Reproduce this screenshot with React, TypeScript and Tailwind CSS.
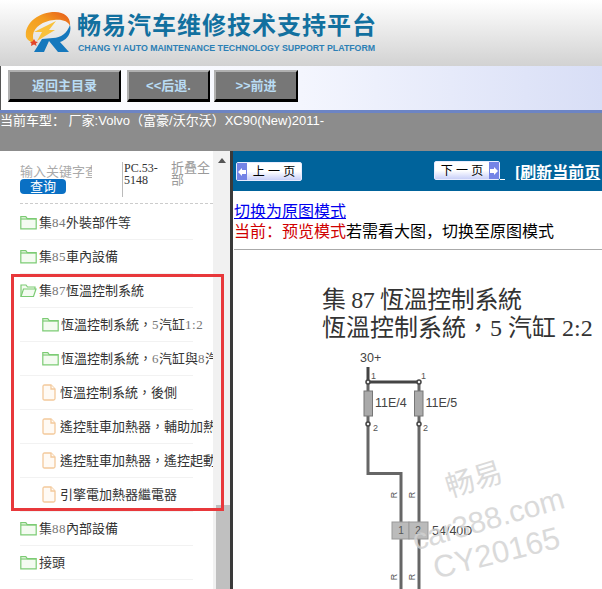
import React from "react";

const cjk = '"Liberation Sans","Noto Sans CJK TC",sans-serif';
const sc = '"Liberation Sans","Noto Sans CJK SC",sans-serif';
const serif = '"Liberation Serif","Noto Sans CJK TC",serif';
const serifSc = '"Liberation Serif","Noto Sans CJK SC",serif';

function Folder({ open }: { open?: boolean }) {
  return (
    <svg width="17" height="15" viewBox="0 0 17 15" className="shrink-0" fill="#f4fbf1" stroke="#7ccb74" strokeWidth="1.2">
      {open ? (
        <>
          <path d="M1 13.500V2h5l1.500 2H15v2" />
          <path d="M1 13.500L3.500 6H16l-2.500 7.500z" />
        </>
      ) : (
        <>
          <path d="M.8 13.800V1.600h5l1.400 2h9v10.200z" />
          <path d="M.8 4h15.400" />
        </>
      )}
    </svg>
  );
}

function Doc() {
  return (
    <svg width="14" height="17" viewBox="0 0 14 17" className="shrink-0" fill="#fffaf4" stroke="#f3c99b" strokeWidth="1.3">
      <path d="M1 2.500Q1 1 2.500 1H9l4 4v9.500q0 1.500-1.500 1.500h-9Q1 16 1 14.500z" />
      <path d="M9 1v4h4" />
    </svg>
  );
}

type Row = { t: React.ReactNode; kind: "folder" | "open" | "doc"; sub?: boolean };
const n = (s: string) => <span className="text-[#777] tracking-[0.5px]" style={{ fontFamily: serif }}>{s}</span>;
const rows: Row[] = [
  { t: <>集{n("84")}外裝部件等</>, kind: "folder" },
  { t: <>集{n("85")}車內設備</>, kind: "folder" },
  { t: <>集{n("87")}恆溫控制系統</>, kind: "open" },
  { t: <>恆溫控制系統，{n("5")}汽缸{n("1:2")}</>, kind: "folder", sub: true },
  { t: <>恆溫控制系統，{n("6")}汽缸與{n("8")}汽缸</>, kind: "folder", sub: true },
  { t: <>恆溫控制系統，後側</>, kind: "doc", sub: true },
  { t: <>遙控駐車加熱器，輔助加熱器</>, kind: "doc", sub: true },
  { t: <>遙控駐車加熱器，遙控起動</>, kind: "doc", sub: true },
  { t: <>引擎電加熱器繼電器</>, kind: "doc", sub: true },
  { t: <>集{n("88")}內部設備</>, kind: "folder" },
  { t: <>接頭</>, kind: "folder" },
];

function NavBtn({ w, children }: { w: string; children: React.ReactNode }) {
  return (
    <div className={`${w} h-[32px] flex items-center justify-center bg-[#777] border-t-2 border-l-2 border-t-[#b0b0b0] border-l-[#b0b0b0] border-b-[3px] border-r-[2px] border-b-black border-r-black text-[#b9dcf4] text-[13px] font-bold whitespace-nowrap`} style={{ fontFamily: sc }}>
      {children}
    </div>
  );
}

function PageBtn({ label, dir }: { label: string; dir: "l" | "r" }) {
  const arrow = (
    <div className="w-[10px] self-stretch bg-[#7484e6] flex items-center justify-center">
      <svg width="8" height="8" viewBox="0 0 8 8" fill="#fff">
        {dir === "l" ? <path d="M0 4l4-4v2h4v4H4v2z" /> : <path d="M8 4L4 0v2H0v4h4v2z" />}
      </svg>
    </div>
  );
  return (
    <div className="w-[66px] h-[19px] flex items-center rounded-[2px] bg-gradient-to-b from-white via-white to-[#c9d0f8] border border-[#e8ecff] text-black text-[12px]" style={{ fontFamily: sc }}>
      {dir === "l" && arrow}
      <span className="flex-1 text-center whitespace-nowrap">{label}</span>
      {dir === "r" && arrow}
    </div>
  );
}

function Diagram() {
  return (
    <svg width="262" height="244" viewBox="0 0 262 244" className="block" style={{ fontFamily: '"Liberation Sans",sans-serif' }}>
      <g fill="none" stroke="#666" strokeWidth="3">
        <path d="M79 37V244" />
        <path d="M28 37V128.500H61V244" />
      </g>
      <path d="M28 22V37H79" fill="none" stroke="#444" strokeWidth="3" />
      <rect x="24" y="46" width="8.500" height="25" fill="#aaa" stroke="#777" />
      <rect x="74.500" y="46" width="8.500" height="25" fill="#aaa" stroke="#777" />
      <g fill="#eee" stroke="#444" strokeWidth="1.500">
        <circle cx="28" cy="37" r="2" />
        <circle cx="79" cy="37" r="2" />
        <circle cx="28" cy="79" r="2" />
        <circle cx="79" cy="79" r="2" />
      </g>
      <rect x="52" y="177" width="17" height="17" fill="#bbb" stroke="#999" />
      <rect x="69" y="177" width="19" height="17" fill="#bbb" stroke="#999" />
      <g fill="#444" fontSize="12.500">
        <text x="20" y="17">30+</text>
        <text x="35" y="62">11E/4</text>
        <text x="85.500" y="62">11E/5</text>
        <text x="92" y="190">54/40D</text>
      </g>
      <g fill="#555" fontSize="9">
        <text x="31" y="34">1</text>
        <text x="81" y="34">1</text>
        <text x="33" y="86">2</text>
        <text x="83" y="86">2</text>
      </g>
      <g fill="#555" fontSize="10" textAnchor="middle">
        <text x="61" y="189">1</text>
        <text x="78" y="189">2</text>
      </g>
      <g fill="#555" fontSize="9" textAnchor="middle">
        <text transform="translate(57 150) rotate(-90)">R</text>
        <text transform="translate(75 150) rotate(-90)">R</text>
        <text transform="translate(57 232) rotate(-90)">R</text>
        <text transform="translate(75 232) rotate(-90)">R</text>
      </g>
      <g fill="#d2d2d2" opacity="0.8" textAnchor="middle">
        <text transform="translate(137 144) rotate(-17)" fontSize="29" style={{ fontFamily: sc }}>畅易</text>
        <text transform="translate(151 184) rotate(-16)" fontSize="30">car388.com</text>
        <text transform="translate(159 218) rotate(-14)" fontSize="31">CY20165</text>
      </g>
    </svg>
  );
}

export default function App() {
  return (
    <div className="relative w-[602px] h-[589px] overflow-hidden bg-white" style={{ fontFamily: cjk }}>
      {/* header */}
      <header className="h-[66px] bg-gradient-to-b from-white to-[#d2d2d2] flex items-start pl-[25px] pt-[12px]">
        <svg width="46" height="41" viewBox="0 0 46 41" className="shrink-0">
          <defs>
            <linearGradient id="o" x1="0" y1="1" x2="1" y2="0">
              <stop offset="0" stopColor="#f8b62d" />
              <stop offset="0.6" stopColor="#f39a1f" />
              <stop offset="1" stopColor="#e5561c" />
            </linearGradient>
          </defs>
          <path d="M1 25C-1 12 13 0 30 0c10 0 16 6 15 14-2-5-8-7-16-6C18 9 9 15 8 23c0 3 0 6 2 8-5-1-8-3-9-6z" fill="url(#o)" />
          <path d="M31 9L24 18h6L12 29l5-9h-8z" fill="#f9c13a" />
          <path d="M9 27l1.500 2.500L13 30l-2 1.500.5 2.500-2.500-1.500L6 34l.5-2.500L5 30l2.500-.5z" fill="#e2452a" />
          <path d="M45 13c2 8-3 15-10 17l9 10H33l-9-11-5 11H9l8-13 11-1c8 0 14-5 17-13z" fill="#1578bd" />
        </svg>
        <div className="ml-[6px] -mt-[1px]">
          <div className="text-[24px] leading-[30px] font-bold text-[#12709f] whitespace-nowrap tracking-[1px]" style={{ fontFamily: sc }}>畅易汽车维修技术支持平台</div>
          <div className="text-[8.800px] leading-[12px] font-bold text-[#2c7fb5] whitespace-nowrap ml-[1px] mt-[1px]">CHANG YI AUTO MAINTENANCE TECHNOLOGY SUPPORT PLATFORM</div>
        </div>
      </header>

      {/* nav */}
      <nav className="h-[44px] bg-gradient-to-r from-white via-[#f4f6fe] to-[#d8def6] flex items-start pl-[7px] pt-[4px] border-l border-[#555]">
        <NavBtn w="w-[113px]">返回主目录</NavBtn>
        <div className="ml-[6px]"><NavBtn w="w-[83px]">&lt;&lt;后退.</NavBtn></div>
        <div className="ml-[4px]"><NavBtn w="w-[84px]">&gt;&gt;前进</NavBtn></div>
      </nav>
      <div className="h-[3px] bg-[#6c84c4]" />

      {/* model */}
      <div className="h-[38px] bg-[#8c8c8c] text-white text-[13px] leading-[15px] whitespace-nowrap" style={{ fontFamily: sc }}>
        当前车型： 厂家:Volvo（富豪/沃尔沃）XC90(New)2011-
      </div>

      <div className="flex h-[438px]">
        {/* sidebar */}
        <aside className="relative w-[230px] shrink-0 flex overflow-hidden">
          <div className="w-[213px] shrink-0 overflow-hidden">
            <div className="h-[53px] ml-[20px] flex border-b border-dashed border-[#ccc] pt-[11px] box-border">
              <div className="w-[72px] overflow-hidden">
                <div className="text-[13px] leading-[15px] text-[#aaa] whitespace-nowrap h-[15px] mt-[2px]" style={{ fontFamily: sc }}>输入关键字查询</div>
                <div className="w-[46px] h-[15px] rounded-[4px] bg-[#0a70c4] text-white text-[13px] leading-[15px] text-center" style={{ fontFamily: sc }}>查询</div>
              </div>
              <div className="ml-[30px] w-[46px] h-[35px] border-l border-[#bbb] text-[12px] leading-[12px] text-[#333] pl-[1px]" style={{ fontFamily: serif }}>PC.53-5148</div>
              <div className="ml-[3px] w-[42px] text-[#999] text-[13px] leading-[12px]" style={{ fontFamily: sc }}>折叠全部</div>
            </div>
            <div className="pt-[2px]">
              {rows.map((r, i) => (
                <div key={i} className={`h-[34px] ml-[20px] w-[173px] flex items-center border-b border-[#f2f2f2] text-[13px] text-[#333] whitespace-nowrap ${r.sub ? "pl-[22px]" : ""}`}>
                  <div className={`flex items-center shrink-0 ${r.kind === "doc" ? "gap-[4px]" : "gap-[2px]"}`}>
                    {r.kind === "doc" ? <Doc /> : <Folder open={r.kind === "open"} />}
                    <span>{r.t}</span>
                  </div>
                </div>
              ))}
            </div>
          </div>
          {/* scrollbar */}
          <div className="w-[17px] shrink-0 bg-[#f1f1f1] flex flex-col items-center">
            <div className="mt-[7px] w-0 h-0 border-l-[4px] border-r-[4px] border-b-[5px] border-l-transparent border-r-transparent border-b-[#555]" />
            <div className="mt-auto w-[14px] h-[84px] ml-[2px] bg-[#c0c0c0]" />
          </div>
        </aside>
        <div className="w-[3px] shrink-0 bg-[#3a3a3a]" />

        {/* content */}
        <main className="flex-1 min-w-0 overflow-hidden">
          <div className="h-[40px] bg-[#00639b] flex items-start pt-[11px] pl-[3px] whitespace-nowrap" style={{ fontFamily: serifSc }}>
            <PageBtn label="上 一 页" dir="l" />
            <div className="ml-[132px] -mt-[1px]"><PageBtn label="下 一 页" dir="r" /></div>
            <span className="w-[5px] h-[18px] border-b border-white" />
            <span className="ml-[10px] text-white text-[16px] leading-[22px] font-bold underline">[刷新当前页</span>
          </div>
          <div className="pt-[11px] h-[59px] border-b border-[#aaa] box-border text-[16px] leading-[20px] ml-[1px] whitespace-nowrap" style={{ fontFamily: serifSc }}>
            <a className="text-[#0000ee] underline">切换为原图模式</a>
            <div><span className="text-[#d00000]">当前：预览模式</span><span className="text-black">若需看大图，切换至原图模式</span></div>
          </div>
          <div className="pl-[89px] pt-[36px] text-[24px] leading-[28px] text-[#333] whitespace-nowrap" style={{ fontFamily: serif }}>
            <div className="tracking-[-0.4px]">集 87 恆溫控制系統</div>
            <div>恆溫控制系統，5 汽缸 2:2</div>
          </div>
          <div className="pl-[107px] pt-[3px]">
            <Diagram />
          </div>
        </main>
      </div>

      {/* highlight annotation */}
      <div className="absolute left-[11px] top-[274px] w-[213px] h-[237px] border-[3px] border-[#e8383b] pointer-events-none" />
    </div>
  );
}
